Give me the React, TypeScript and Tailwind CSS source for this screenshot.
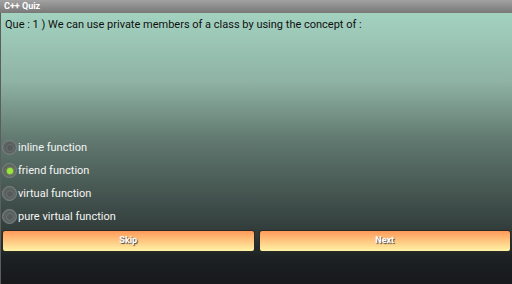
import React from "react";

const options = ["inline function", "friend function", "virtual function", "pure virtual function"];

function Radio({ checked }: { checked: boolean }) {
  return (
    <div className="w-[15px] h-[15px] rounded-full border border-[#7e8482] bg-[radial-gradient(circle,#4e5453_0%,#5c6261_55%,#6a706f_100%)] flex items-center justify-center shrink-0">
      {checked ? (
        <div className="w-[6px] h-[6px] rounded-full bg-[#9be63a] shadow-[0_0_3px_#b8ff4a]" />
      ) : (
        <div className="w-[8px] h-[8px] rounded-full bg-[#555b5a] border border-[#6b7170]" />
      )}
    </div>
  );
}

export default function App() {
  return (
    <div className="w-[512px] h-[284px] flex flex-col overflow-hidden font-['Roboto',sans-serif]">
      <div className="h-[13px] bg-gradient-to-b from-[#a2a2a2] to-[#787878] flex items-center pl-[4px]">
        <span className="text-[9px] font-bold text-white leading-none">C++ Quiz</span>
      </div>
      <div className="flex-1 flex flex-col border-l border-l-[#5a5e5d] bg-[linear-gradient(to_bottom,#a3d2c0_0%,#8fb3a5_25%,#60786f_47%,#323d3b_80%,#1d2123_90%,#17191b_100%)]">
        <div className="pl-[4px] pt-[4px] text-[11px] leading-[16px] text-[#111]">
          Que : 1 ) We can use private members of a class by using the concept of :
        </div>
        <div className="flex-1" />
        <div className="flex flex-col pl-[1px]">
          {options.map((o, i) => (
            <div key={o} className="h-[23px] flex items-center gap-[1px]">
              <Radio checked={i === 1} />
              <span className="text-[11px] text-[#f4f4f4] leading-none">{o}</span>
            </div>
          ))}
        </div>
        <div className="flex gap-[4px] px-[1px] pt-[2px] pb-[32px]">
          {["Skip", "Next"].map((b) => (
            <div
              key={b}
              className="flex-1 h-[22px] rounded-[3px] border border-[#2a2a24] bg-gradient-to-b from-[#ff9a5a] to-[#fff3a6] flex items-center justify-center"
            >
              <span className="text-[9px] font-bold text-white [text-shadow:1px_1px_1px_#444]">{b}</span>
            </div>
          ))}
        </div>
      </div>
    </div>
  );
}
